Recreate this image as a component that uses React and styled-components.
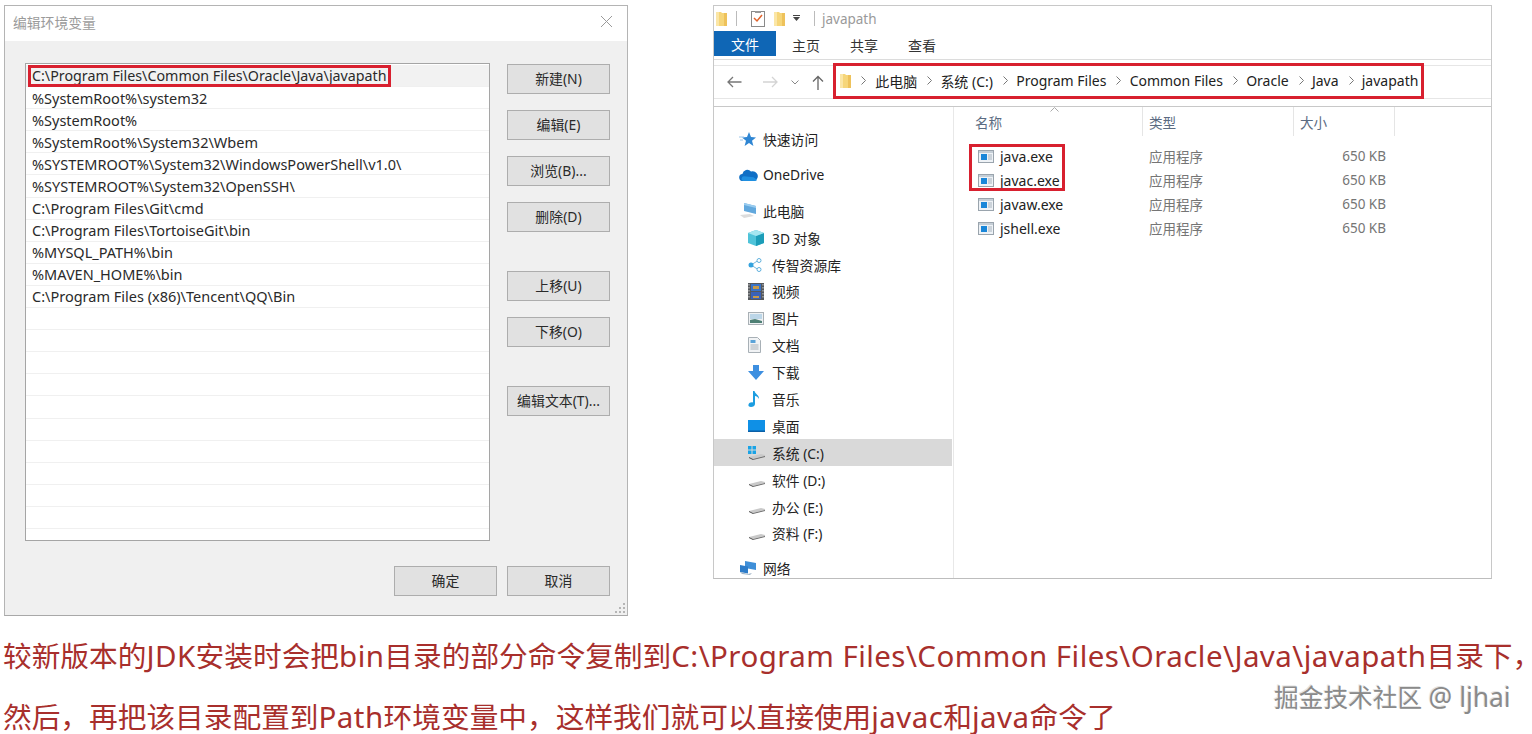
import React from "react";
import styled, { createGlobalStyle } from "styled-components";

const Global = createGlobalStyle`
  html, body { margin: 0; padding: 0; background: #fff; }
  body { font-family: "Noto Sans", "Noto Sans CJK SC", sans-serif; }
  * { box-sizing: border-box; }
`;
const Page = styled.div`
  position: relative; width: 1532px; height: 734px; overflow: hidden; background: #fff;
  padding: 5px 0 0 4px;
`;
const Shots = styled.div`display: flex; align-items: flex-start; gap: 85px;`;

/* dialog */
const Dialog = styled.section`
  width: 624px; height: 611px; background: #f0f0f0; border: 1px solid #b4b4b4; border-bottom-color: #a8a8a8;
  display: flex; flex-direction: column; position: relative;
`;
const DialogTitle = styled.header`
  height: 35px; background: #fff; display: flex; align-items: center; justify-content: space-between;
  padding: 0 14px 4px 8px; font-size: 13.8px; color: #9b9b9b;
`;
const DialogBody = styled.div`
  flex: 1; display: flex; flex-direction: column; justify-content: space-between; padding: 22px 17px 19px 20px;
`;
const DialogMain = styled.div`display: flex; gap: 17px; align-items: flex-start;`;
const PathList = styled.ul`
  list-style: none; margin: 0; padding: 1px 0 0; width: 465px; height: 478px; background: #fff;
  border: 1px solid #a5a5a5; overflow: hidden;
`;
const PathRow = styled.li`
  height: 22.1px; padding-left: 6px; display: flex; align-items: center; font-size: 14.5px; color: #2a2a2a; white-space: nowrap;
  border-bottom: 1px solid #f0f0f0; background: ${p => p.$first ? "#f2f2f2" : "#fff"};
`;
const Marked = styled.span`
  outline: 3px solid #d8202f; padding: 0 1px; margin-left: -1px; line-height: 16px; font-size: 14.27px;
`;
const Side = styled.div`display: flex; flex-direction: column; gap: 39px; padding-top: 1px;`;
const BtnGroup = styled.div`display: flex; flex-direction: column; gap: 16px;`;
const Btn = styled.button`
  width: 103px; height: 30px; background: #e1e1e1; border: 1px solid #adadad; padding: 0 0 2px;
  font: 13.9px "Noto Sans", "Noto Sans CJK SC", sans-serif; color: #2a2a2a;
`;
const DialogFoot = styled.div`display: flex; justify-content: flex-end; gap: 10px;`;
const Grip = styled.svg`position: absolute; right: 1px; bottom: 1px;`;

/* explorer */
const Explorer = styled.section`
  width: 779px; height: 574px; background: #fff; border: 1px solid #c8c8c8; border-bottom-color: #bdbdbd;
  display: flex; flex-direction: column; overflow: hidden; flex: none;
`;
const QuickBar = styled.div`
  height: 25px; display: flex; align-items: center; padding-left: 2px; font-size: 13.5px; color: #9a9a9a; flex: none;
`;
const VSep = styled.i`width: 1px; height: 15px; background: #bbb; margin: ${p => p.$m};`;
const Tabs = styled.div`
  height: 29px; display: flex; align-items: flex-start; border-bottom: 1px solid #dcdcdc; flex: none;
`;
const FileTab = styled.div`
  width: 62px; height: 25px; background: #0f66b5; color: #fff; font-size: 14px; margin-right: 1px;
  display: flex; align-items: center; justify-content: center;
`;
const Tab = styled.div`
  width: 58px; height: 28px; font-size: 14px; color: #333; display: flex; align-items: center; justify-content: center;
`;
const AddressBand = styled.div`
  height: 47px; padding-top: 5px; border-bottom: 1px solid #c8c8c8; flex: none;
`;
const AddressLine = styled.div`
  height: 34px; border-top: 1px solid #e6e6e6; border-bottom: 1px solid #e6e6e6;
  display: flex; align-items: center; padding-left: 13px; position: relative;
`;
const NavIcons = styled.div`display: flex; align-items: center; width: 106px; flex: none;`;
const Crumbs = styled.div`
  height: 36px; margin-top: -3px; width: 591px; border: 3px solid #d8202f; flex: none; display: flex; align-items: center;
  padding-left: 4px; font-size: 14px; color: #222; white-space: nowrap;
`;
const Crumb = styled.span`margin-left: ${p => p.$m ?? 0}px;`;
const Caret = styled.svg`margin: 0 8.2px 0 10px; flex: none;`;
const Panes = styled.div`flex: 1; display: flex; min-height: 0;`;
const Sidebar = styled.nav`
  width: 240px; padding-top: 18.5px; border-right: 1px solid #e8e8e8; flex: none; overflow: hidden;
`;
const NavRow = styled.div`
  height: 26.9px; display: flex; align-items: center; font-size: 13.8px; color: #222; white-space: nowrap;
  padding-left: ${p => p.$sub ? 34 : 25}px; margin-top: ${p => p.$mt ?? 0}px; margin-right: 1px;
  background: ${p => p.$on ? "#d9d9d9" : "transparent"};
`;
const NavIcon = styled.span`width: 24px; height: 18px; display: flex; align-items: center; flex: none;`;
const Files = styled.div`flex: 1; position: relative; min-width: 0;`;
const HeadRow = styled.div`
  height: 29px; display: grid; grid-template-columns: 189px 151px 101px; color: #5b6b82; font-size: 13.6px;
  position: relative;
`;
const HeadCell = styled.div`
  border-right: 1px solid #e5e5e5; display: flex; align-items: center; padding-left: ${p => p.$p}px;
`;
const SortMark = styled.svg`position: absolute; left: 96px; top: 0;`;
const FileList = styled.div`padding-top: 8px; position: relative;`;
const FileRow = styled.div`
  height: 24px; display: grid; grid-template-columns: 171px 130px 107px; font-size: 13.5px; align-items: center; color: #757575;
  padding-left: 24px;
`;
const FileName = styled.div`display: flex; align-items: center; gap: 6px; color: #222; font-size: 14px;`;
const Size = styled.div`text-align: right;`;
const FileMark = styled.div`
  position: absolute; left: 15px; top: 8px; width: 96px; height: 47px; border: 3px solid #d8202f; pointer-events: none;
`;

/* caption */
const Caption = styled.div`
  margin: 23px 0 0 -1px; color: #a82f2c; font-size: 28.7px; line-height: 34px; white-space: nowrap;
  display: flex; flex-direction: column; gap: 27px;
`;
const Latin = styled.span`font-size: 29.5px; letter-spacing: .44px;`;
const Watermark = styled.div`
  position: absolute; left: 1274px; top: 678px; font-size: 24.7px; color: #8a8a8a;
  text-shadow: 1px 1px 1px #fff, -1px -1px 0 #e4e4e4;
`;
const WatermarkName = styled.span`font-size: 26.4px;`;

/* icons */
const FolderTall = ({ x = 0 }) => (
  <svg width="11" height="16" viewBox="0 0 11 16" style={{ marginLeft: x, flex: "none" }}>
    <path d="M0 1h5l1 1h5v13H0z" fill="#f6d67a" />
    <path d="M0 1h3v14H0z" fill="#fbe6a6" />
    <path d="M8 2h3v13H8z" fill="#eec25b" />
  </svg>
);
const ExeIcon = () => (
  <svg width="16" height="13" viewBox="0 0 16 13" style={{ flex: "none" }}>
    <rect x=".5" y=".5" width="15" height="12" fill="#eef2f6" stroke="#9aa4ad" />
    <rect x="1" y="1" width="14" height="2" fill="#c5ced6" />
    <rect x="3" y="4" width="6" height="6" fill="#1a86d8" />
    <path d="M10 5h4M10 7h4M10 9h4" stroke="#a8b3bd" />
  </svg>
);
const Drive = ({ win }) => (
  <svg width="18" height="14" viewBox="0 0 18 14">
    <path d="M1 11l12-3 4 1v1L5 13z" fill="#c9c9c9" />
    <path d="M1 11l4 2v1L1 12z" fill="#4a4a4a" />
    <path d="M5 13l12-3v1L5 14z" fill="#6b6b6b" />
    {win && <g fill="#19a3e6"><rect x="0" y="0" width="3.5" height="3.5" /><rect x="4.5" y="0" width="3.5" height="3.5" /><rect x="0" y="4.5" width="3.5" height="3.5" /><rect x="4.5" y="4.5" width="3.5" height="3.5" /></g>}
  </svg>
);
const icons = {
  star: <svg width="18" height="16" viewBox="0 0 18 16"><path d="M10 1l2 5 5 .4-4 3.4 1.4 5.2L10 12l-4.400 3 1.400-5.200L3 6.400 8 6z" fill="#2f86d3" /><path d="M0 6h5M1 9h3" stroke="#9cc6ea" /></svg>,
  cloud: <svg width="19" height="12" viewBox="0 0 19 12"><path d="M4 12a3.500 3.500 0 0 1-.6-7A5 5 0 0 1 12 2.500 4 4 0 0 1 15.500 12z" fill="#0f6fc6" /><path d="M4 12a2.500 2.500 0 0 1 1-4.800l9.500 1 3.500 2.500c-.5 1-1.500 1.300-2.500 1.300z" fill="#1f8fe0" /></svg>,
  pc: <svg width="18" height="17" viewBox="0 0 18 17"><path d="M5 1l12 3v8L5 9z" fill="#62a8dd" /><path d="M5 1l12 3v2L5 3z" fill="#9accef" /><path d="M1 13l10-1 4 2-10 2z" fill="#dcdcdc" /></svg>,
  cube: <svg width="16" height="16" viewBox="0 0 16 16"><path d="M8 0l8 3v10l-8 3-8-3V3z" fill="#4fc3d9" /><path d="M8 6l8-3v10l-8 3z" fill="#1c9db8" /><path d="M8 0l8 3-8 3-8-3z" fill="#a5e6f0" /></svg>,
  share: <svg width="14" height="14" viewBox="0 0 14 14"><path d="M3 7l8-5M3 7l8 5" stroke="#7ab7dc" /><circle cx="3" cy="7" r="2.500" fill="#35a3de" /><circle cx="11" cy="2.500" r="2" fill="#fff" stroke="#5fb0dd" /><circle cx="11" cy="11.500" r="2" fill="#fff" stroke="#5fb0dd" /></svg>,
  film: <svg width="16" height="17" viewBox="0 0 16 17"><rect width="16" height="17" fill="#55585c" /><rect x="3" y="1" width="10" height="7" fill="#3a74c8" /><rect x="3" y="9" width="10" height="7" fill="#3a62b8" /><path d="M5 3h6v3H5z" fill="#c79a4a" /><path d="M5 13h6v2H5z" fill="#c79a4a" /><path d="M1 1v15M15 1v15" stroke="#ccc" strokeDasharray="1.500 1.500" /></svg>,
  picture: <svg width="16" height="13" viewBox="0 0 16 13"><rect x=".5" y=".5" width="15" height="12" fill="#eef1f3" stroke="#a9b0b5" /><rect x="2" y="2" width="12" height="5" fill="#bcd6e8" /><path d="M2 11V8l5-1 7 2v2z" fill="#4e7f74" /></svg>,
  doc: <svg width="13" height="16" viewBox="0 0 13 16"><path d="M.5.500h9l3 3v12H.5z" fill="#f1f3f5" stroke="#a8b0b6" /><path d="M2.500 3h5v3h-5z" fill="#5ba3d8" /><path d="M2.500 8h8M2.500 10h8M2.500 12h8" stroke="#a9b1b8" /></svg>,
  down: <svg width="16" height="15" viewBox="0 0 16 15"><path d="M5 0h6v6h5l-8 9-8-9h5z" fill="#3d8fe0" /></svg>,
  music: <svg width="12" height="16" viewBox="0 0 12 16"><path d="M5 0h1.500c.5 3 5 4 4.500 8-1-2-2.500-3-4-3v8c0 2-2 3-4 3s-3-1-2.500-2.500S3 11 5 11.500z" fill="#1c9de0" /></svg>,
  desk: <svg width="17" height="12" viewBox="0 0 17 12"><rect width="17" height="12" fill="#0f90e6" /><rect y="10.500" width="17" height="1.500" fill="#0b5fa6" /></svg>,
  net: <svg width="18" height="16" viewBox="0 0 18 16"><path d="M6 1l11 2v7L6 8z" fill="#3f8fd8" /><path d="M1 5l8 1.500v7L1 12z" fill="#2d7cc9" /><path d="M1 12l8 2 4-1-2 2-8-1z" fill="#9fb4c6" /></svg>,
};

const paths = [
  "%SystemRoot%\\system32", "%SystemRoot%", "%SystemRoot%\\System32\\Wbem",
  "%SYSTEMROOT%\\System32\\WindowsPowerShell\\v1.0\\", "%SYSTEMROOT%\\System32\\OpenSSH\\",
  "C:\\Program Files\\Git\\cmd", "C:\\Program Files\\TortoiseGit\\bin", "%MYSQL_PATH%\\bin",
  "%MAVEN_HOME%\\bin", "C:\\Program Files (x86)\\Tencent\\QQ\\Bin",
  ...Array(10).fill(""),
];
const crumbs = ["此电脑", "系统 (C:)", "Program Files", "Common Files", "Oracle", "Java", "javapath"];
const files = ["java.exe", "javac.exe", "javaw.exe", "jshell.exe"];
const subs = [
  ["cube", "3D 对象"], ["share", "传智资源库"], ["film", "视频"], ["picture", "图片"], ["doc", "文档"],
  ["down", "下载"], ["music", "音乐"], ["desk", "桌面"],
];
const drives = [["系统 (C:)", true], ["软件 (D:)"], ["办公 (E:)"], ["资料 (F:)"]];

const Chev = () => (
  <Caret width="5" height="9" viewBox="0 0 5 9"><path d="M.5.500l4 4-4 4" fill="none" stroke="#777" /></Caret>
);

export default function App() {
  return (
    <Page>
      <Global />
      <Shots>
        <Dialog>
          <DialogTitle>
            <span>编辑环境变量</span>
            <svg width="13" height="13" viewBox="0 0 13 13"><path d="M1 1l11 11M12 1L1 12" stroke="#9a9a9a" /></svg>
          </DialogTitle>
          <DialogBody>
            <DialogMain>
              <PathList>
                <PathRow $first><Marked>C:\Program Files\Common Files\Oracle\Java\javapath</Marked></PathRow>
                {paths.map((p, i) => <PathRow key={i}>{p}</PathRow>)}
              </PathList>
              <Side>
                <BtnGroup>
                  <Btn>新建(N)</Btn><Btn>编辑(E)</Btn><Btn>浏览(B)...</Btn><Btn>删除(D)</Btn>
                </BtnGroup>
                <BtnGroup>
                  <Btn>上移(U)</Btn><Btn>下移(O)</Btn>
                </BtnGroup>
                <BtnGroup>
                  <Btn>编辑文本(T)...</Btn>
                </BtnGroup>
              </Side>
            </DialogMain>
            <DialogFoot><Btn>确定</Btn><Btn>取消</Btn></DialogFoot>
          </DialogBody>
          <Grip width="11" height="11" viewBox="0 0 11 11"><g fill="#b5b5b5"><rect x="8" y="0" width="2" height="2" /><rect x="4" y="4" width="2" height="2" /><rect x="8" y="4" width="2" height="2" /><rect x="0" y="8" width="2" height="2" /><rect x="4" y="8" width="2" height="2" /><rect x="8" y="8" width="2" height="2" /></g></Grip>
        </Dialog>

        <Explorer>
          <QuickBar>
            <FolderTall />
            <VSep $m="0 0 0 9px" />
            <svg width="14" height="17" viewBox="0 0 14 17" style={{ marginLeft: 14 }}><rect x=".5" y="1.500" width="13" height="15" fill="#fff" stroke="#8a8a8a" /><path d="M3 8l3 3 5-6" fill="none" stroke="#e0622a" strokeWidth="1.500" /><path d="M4 1h6v2H4z" fill="#999" /></svg>
            <FolderTall x={9} />
            <svg width="7" height="7" viewBox="0 0 7 7" style={{ marginLeft: 8 }}><path d="M0 0h7v1H0zM0 2h7L3.500 6z" fill="#444" /></svg>
            <VSep $m="0 7px 0 14px" />
            javapath
          </QuickBar>
          <Tabs>
            <FileTab>文件</FileTab>
            <Tab>主页</Tab>
            <Tab>共享</Tab>
            <Tab>查看</Tab>
          </Tabs>
          <AddressBand>
            <AddressLine>
              <NavIcons>
                <svg width="15" height="12" viewBox="0 0 15 12"><path d="M14.500 6H1.500M6 1L1 6l5 5" fill="none" stroke="#777" strokeWidth="1.300" /></svg>
                <svg width="16" height="12" viewBox="0 0 16 12" style={{ marginLeft: 20 }}><path d="M1 6h13.500M10 1l5 5-5 5" fill="none" stroke="#d4d4d4" strokeWidth="1.300" /></svg>
                <svg width="8" height="5" viewBox="0 0 8 5" style={{ marginLeft: 13 }}><path d="M.5.500L4 4 7.500.500" fill="none" stroke="#888" /></svg>
                <svg width="12" height="15" viewBox="0 0 12 15" style={{ marginLeft: 13 }}><path d="M6 15V1.500M1 6.500l5-5 5 5" fill="none" stroke="#666" strokeWidth="1.300" /></svg>
              </NavIcons>
              <Crumbs>
                <FolderTall />
                {crumbs.map((c, i) => (
                  <React.Fragment key={c}><Chev /><Crumb $m={i === 0 ? 1 : 0}>{c}</Crumb></React.Fragment>
                ))}
              </Crumbs>
            </AddressLine>
          </AddressBand>
          <Panes>
            <Sidebar>
              <NavRow><NavIcon>{icons.star}</NavIcon>快速访问</NavRow>
              <NavRow $mt={9}><NavIcon>{icons.cloud}</NavIcon>OneDrive</NavRow>
              <NavRow $mt={9}><NavIcon>{icons.pc}</NavIcon>此电脑</NavRow>
              {subs.map(([k, t]) => <NavRow $sub key={t}><NavIcon>{icons[k]}</NavIcon>{t}</NavRow>)}
              {drives.map(([t, w]) => <NavRow $sub $on={w} key={t}><NavIcon><Drive win={w} /></NavIcon>{t}</NavRow>)}
              <NavRow $mt={8}><NavIcon>{icons.net}</NavIcon>网络</NavRow>
            </Sidebar>
            <Files>
              <HeadRow>
                <HeadCell $p={21}>名称</HeadCell>
                <HeadCell $p={6}>类型</HeadCell>
                <HeadCell $p={6}>大小</HeadCell>
                <SortMark width="9" height="5" viewBox="0 0 9 5"><path d="M.5 4.500l4-4 4 4" fill="none" stroke="#aaa" /></SortMark>
              </HeadRow>
              <FileList>
                {files.map(f => (
                  <FileRow key={f}>
                    <FileName><ExeIcon />{f}</FileName>
                    <span>应用程序</span>
                    <Size>650 KB</Size>
                  </FileRow>
                ))}
                <FileMark />
              </FileList>
            </Files>
          </Panes>
        </Explorer>
      </Shots>
      <Caption>
        <div>较新版本的<Latin>JDK</Latin>安装时会把<Latin>bin</Latin>目录的部分命令复制到<Latin>C:\Program Files\Common Files\Oracle\Java\javapath</Latin>目录下，</div>
        <div>然后，再把该目录配置到<Latin>Path</Latin>环境变量中，这样我们就可以直接使用<Latin>javac</Latin>和<Latin>java</Latin>命令了</div>
      </Caption>
      <Watermark>掘金技术社区 <WatermarkName>@ ljhai</WatermarkName></Watermark>
    </Page>
  );
}
